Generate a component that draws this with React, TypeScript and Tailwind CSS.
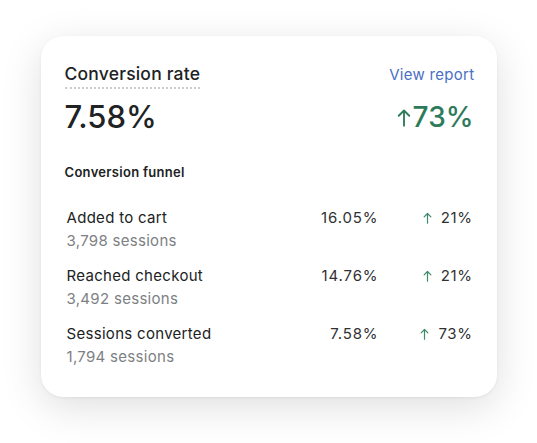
import React from "react";

type FunnelRow = {
  label: string;
  sessions: string;
  rate: string;
  change: string;
};

const rows: FunnelRow[] = [
  { label: "Added to cart", sessions: "3,798 sessions", rate: "16.05%", change: "21%" },
  { label: "Reached checkout", sessions: "3,492 sessions", rate: "14.76%", change: "21%" },
  { label: "Sessions converted", sessions: "1,794 sessions", rate: "7.58%", change: "73%" },
];

const ArrowUp: React.FC<{ className?: string }> = ({ className }) => (
  <svg viewBox="0 0 12 16" fill="none" stroke="currentColor" strokeWidth={1.6} className={className}>
    <path d="M6 15V2M1.5 6.5L6 2l4.5 4.5" strokeLinecap="round" strokeLinejoin="round" />
  </svg>
);

export default function App() {
  return (
    <div
      className="flex h-[443px] w-[537px] items-start justify-center bg-white pt-[36px] text-[#202223]"
      style={{ fontFamily: "Inter, 'Noto Sans', sans-serif" }}
    >
      <div className="flex h-[361px] w-[456px] flex-col rounded-[22px] bg-white pl-[24px] pr-[22px] pt-[27px] shadow-[0_10px_40px_rgba(0,0,0,0.13),0_1px_3px_rgba(0,0,0,0.06)]">
        <div className="flex items-start justify-between">
          <span className="border-b-2 border-dotted border-[#c9cccf] pb-[2px] text-[17.5px] leading-[22px] font-medium tracking-[0.2px]">
            Conversion rate
          </span>
          <span className="mt-[2px] text-[15px] leading-[20px] tracking-[0.3px] text-[#4a70c2]">View report</span>
        </div>
        <div className="mt-[8px] flex items-center justify-between">
          <span className="text-[31px] leading-[40px] font-medium tracking-[0px]">7.58%</span>
          <span className="mr-[1px] flex items-center gap-[2px] text-[28px] leading-[40px] font-medium text-[#2e7b5b]">
            <ArrowUp className="h-[19px] w-[14px]" />
            73%
          </span>
        </div>
        <div className="mt-[26px] text-[13px] leading-[18px] font-semibold tracking-[0.3px]">Conversion funnel</div>
        <div className="mt-[26px] flex flex-col gap-[12px] pl-[2px] pr-[2px] tracking-[0.3px]">
          {rows.map((row) => (
            <div key={row.label} className="flex items-start">
              <div className="flex flex-1 flex-col">
                <span className="text-[15px] leading-[22px]">{row.label}</span>
                <span className="text-[15px] leading-[24px] text-[#7d8083]">{row.sessions}</span>
              </div>
              <span className="w-[100px] text-right text-[15px] leading-[22px] tracking-[0.9px] text-[#303133]">
                {row.rate}
              </span>
              <span className="flex w-[94px] items-center justify-end gap-[9px] text-[15px] leading-[22px] tracking-[0.6px] text-[#303133]">
                <ArrowUp className="h-[12px] w-[9px] text-[#3f8a6a]" />
                {row.change}
              </span>
            </div>
          ))}
        </div>
      </div>
    </div>
  );
}
